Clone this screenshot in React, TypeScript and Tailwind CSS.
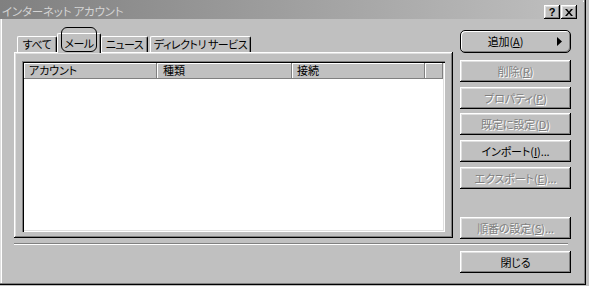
import React from "react";

const raised =
  "bg-[#c0c0c0] shadow-[inset_-1px_-1px_#000,inset_1px_1px_#fff,inset_-2px_-2px_#808080,inset_2px_2px_#dfdfdf]";
const disabledText = "text-[#808080] [text-shadow:1px_1px_0_#fff]";

function Btn({
  children,
  disabled,
  className = "",
}: {
  children: React.ReactNode;
  disabled?: boolean;
  className?: string;
}) {
  return (
    <div
      className={`w-[111px] h-[22px] flex items-center justify-center whitespace-nowrap ${raised} ${
        disabled ? disabledText : "text-black"
      } ${className}`}
    >
      <span>{children}</span>
    </div>
  );
}

function Tab({
  label,
  width,
  selected,
  className = "",
}: {
  label: string;
  width: string;
  selected?: boolean;
  className?: string;
}) {
  return (
    <div
      className={`${width} ${
        selected ? "h-[20px] mb-[-1px] relative z-10" : "h-[16px]"
      } bg-[#c0c0c0] border-t border-l border-white border-r border-r-black rounded-t-[2px] shadow-[inset_-1px_0_#808080] flex items-start justify-center whitespace-nowrap tracking-[-0.5px] pt-[1px] ${className}`}
    >
      {selected && (
        <div className="absolute left-[3px] top-[-7px] w-[36px] h-[25px] border border-black rounded-[6px]" />
      )}
      <span className={selected ? "mt-[2px]" : ""}>{label}</span>
    </div>
  );
}

export default function App() {
  return (
    <div className="w-[589px] h-[286px] bg-[#c0c0c0] overflow-hidden text-[11px] leading-[13px] font-['Noto_Sans_CJK_JP',sans-serif] [font-feature-settings:'palt'] tracking-[-0.1px]">
      <div className="w-[586px] h-[285px] flex flex-col shadow-[inset_-1px_-1px_#000,inset_-2px_-2px_#808080,inset_1px_1px_#dfdfdf,inset_2px_2px_#fff]">
        {/* title bar */}
        <div className="w-[583px] h-[19px] shrink-0 bg-gradient-to-r from-[#808080] to-[#c0c0c0] flex items-center justify-between pl-[2px] pr-[6px] pt-[4px]">
          <span className="text-[#d4d4d4] text-[11.5px] tracking-[-0.2px]">インターネット アカウント</span>
          <div className="flex items-center gap-[1px] mt-[1px]">
            <div className={`w-[16px] h-[14px] ${raised} flex items-center justify-center font-['Liberation_Sans',sans-serif] font-bold text-[11px] text-black`}>
              ?
            </div>
            <div className={`w-[16px] h-[14px] ${raised} flex items-center justify-center`}>
              <svg width="8" height="7" viewBox="0 0 8 7">
                <path d="M0 0h2l2 2.5L6 0h2L5 3.5 8 7H6L4 4.5 2 7H0l3-3.5z" fill="#000" />
              </svg>
            </div>
          </div>
        </div>

        {/* body */}
        <div className="pl-[14px] pt-[11px] flex flex-col">
          <div className="flex">
            {/* left: tabs + panel */}
            <div className="w-[439px] pt-[3px] flex flex-col">
              <div className="flex items-end pl-[3px] h-[19px]">
                <Tab label="すべて" width="w-[40px]" />
                <Tab label="メール" width="w-[44px]" selected />
                <Tab label="ニュース" width="w-[47px]" />
                <Tab label="ディレクトリ サービス" width="w-[101px]" className="ml-[2px]" />
              </div>
              <div className="h-[186px] bg-[#c0c0c0] shadow-[inset_-1px_-1px_#000,inset_1px_1px_#fff,inset_-2px_-2px_#808080,inset_2px_2px_#dfdfdf] pl-[8px] pt-[9px]">
                <div className="w-[423px] h-[171px] bg-white p-[2px] shadow-[inset_1px_1px_#808080,inset_2px_2px_#000,inset_-1px_-1px_#fff,inset_-2px_-2px_#dfdfdf]">
                  <div className="flex h-[16px] text-black">
                    <div className="w-[133px] bg-[#c0c0c0] shadow-[inset_-1px_-1px_#808080,inset_1px_1px_#fff] pl-[5px] pt-[1px]">アカウント</div>
                    <div className="w-[135px] bg-[#c0c0c0] shadow-[inset_-1px_-1px_#808080,inset_1px_1px_#fff] pl-[6px] pt-[1px]">種類</div>
                    <div className="w-[133px] bg-[#c0c0c0] shadow-[inset_-1px_-1px_#808080,inset_1px_1px_#fff] pl-[5px] pt-[1px]">接続</div>
                    <div className="flex-1 bg-[#c0c0c0] shadow-[inset_-1px_-1px_#808080,inset_1px_1px_#fff]" />
                  </div>
                </div>
              </div>
            </div>

            {/* right: buttons */}
            <div className="ml-[7px] w-[111px] flex flex-col">
              <div className="w-[111px] h-[23px] border border-black rounded-[5px] bg-[#c0c0c0] shadow-[inset_1px_1px_#fff,inset_-1px_-1px_#808080] flex items-center text-black">
                <span className="flex-1 text-center pl-[2px]">
                  追加(<span className="underline">A</span>)
                </span>
                <div className="w-[22px] flex justify-end pr-[8px]">
                  <svg width="5" height="9" viewBox="0 0 5 9">
                    <path d="M0 0l5 4.5L0 9z" fill="#000" />
                  </svg>
                </div>
              </div>
              <Btn disabled className="mt-[7px]">
                削除(<span className="underline">R</span>)
              </Btn>
              <Btn disabled className="mt-[5px]">
                プロパティ(<span className="underline">P</span>)
              </Btn>
              <Btn disabled className="mt-[4px]">
                既定に設定(<span className="underline">D</span>)
              </Btn>
              <Btn className="mt-[5px]">
                インポート(<span className="underline">I</span>)...
              </Btn>
              <Btn disabled className="mt-[5px]">
                エクスポート(<span className="underline">E</span>)...
              </Btn>
              <Btn disabled className="mt-[28px]">
                順番の設定(<span className="underline">S</span>)...
              </Btn>
            </div>
          </div>

          {/* separator */}
          <div className="mt-[4px] w-[554px] h-[2px] border-t border-[#808080] border-b border-b-white" />

          <div className="mt-[6px] pl-[446px]">
            <Btn>閉じる</Btn>
          </div>
        </div>
      </div>
    </div>
  );
}
